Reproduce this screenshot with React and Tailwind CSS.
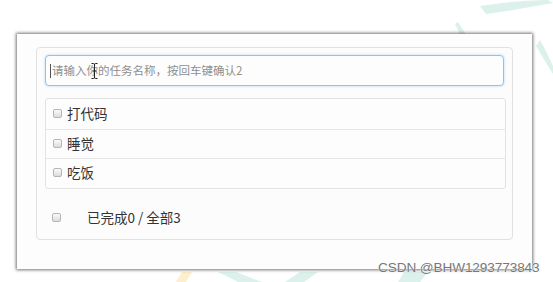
import React from 'react'

const cjk = { fontFamily: '"Noto Sans CJK SC", "Liberation Sans", sans-serif' }

const Box = () => (
  <span className="inline-block w-[9px] h-[9px] rounded-[2px] border border-[#b5b5b5] bg-gradient-to-b from-[#fafafa] to-[#dcdcdc] shrink-0" />
)

const todos = ['打代码', '睡觉', '吃饭']

export default function App() {
  return (
    <div className="relative w-[553px] h-[282px] bg-white overflow-hidden" style={cjk}>
      {/* watermark strokes behind the window */}
      <svg className="absolute inset-0" width="553" height="282" viewBox="0 0 553 282">
        <path d="M480 6 C500 3 525 0 548 0 L553 3 C530 7 505 12 486 14 Z" fill="#dcf1eb" />
        <path d="M458 22 C462 28 466 34 468 40 L462 40 C460 34 457 28 455 24 Z" fill="#dcf1eb" />
        <path d="M540 40 C546 50 550 60 553 66 L553 74 C548 66 542 56 536 46 Z" fill="#dcf1eb" />
        <path d="M176 282 L182 272 L192 272 L186 282 Z" fill="#fdefcc" />
        <path d="M218 272 L236 272 L262 282 L238 282 Z" fill="#dcf1eb" />
        <path d="M285 282 L300 272 L318 272 L304 282 Z" fill="#dcf1eb" />
        <path d="M404 272 L428 272 L420 282 L398 282 Z" fill="#dcf1eb" />
      </svg>

      <div className="relative pt-[34px] pl-[17px]">
        <div className="w-[515px] h-[235px] bg-[#fdfdfd] shadow-[0_0_3px_1px_rgba(0,0,0,0.55)] pt-[13px] pl-[19px]">
          <div className="w-[477px] h-[193px] rounded-[4px] border border-[#e1e1e1] bg-[#fcfcfc] pt-[7px] pl-[8px]">
            {/* input */}
            <div className="relative w-[459px] h-[31px] rounded-[4px] border border-[#8cc4ee] bg-[#fdfdfd] shadow-[0_0_3px_rgba(102,175,233,0.45)] flex items-center pl-[4px]">
              <span className="w-px h-[14px] bg-[#555] mr-[1px]" />
              <span className="text-[11.5px] text-[#8f8f8f] leading-none">请输入你的任务名称，按回车键确认2</span>
              <svg className="absolute left-[45px] top-[7px]" width="7" height="16" viewBox="0 0 7 16">
                <path d="M0.5 0.5 H2.5 Q3.5 0.5 3.5 2 V14 Q3.5 15.5 2.5 15.5 H0.5 M6.5 0.5 H4.5 Q3.5 0.5 3.5 2 M6.5 15.5 H4.5 Q3.5 15.5 3.5 14 M1.5 8 H5.5" stroke="#222" strokeWidth="1" fill="none" />
              </svg>
            </div>

            {/* list */}
            <div className="mt-[12px] w-[461px] rounded-[3px] border border-[#e3e3e3] bg-[#fdfdfd]">
              {todos.map((t, i) => (
                <div
                  key={t}
                  className={`h-[29.5px] flex items-center gap-[5px] pl-[7px] pb-[1px] ${i > 0 ? 'border-t border-[#e6e6e6]' : ''}`}
                >
                  <Box />
                  <span className="text-[13.5px] text-[#333] leading-none">{t}</span>
                </div>
              ))}
            </div>

            {/* footer */}
            <div className="mt-[22px] flex items-center pl-[7px]">
              <Box />
              <span className="ml-[26px] text-[13.5px] text-[#333] leading-none">已完成0 / 全部3</span>
            </div>
          </div>
        </div>
      </div>

      <div
        className="absolute left-[378px] top-[261px] text-[13.6px] text-[#777] leading-none tracking-[-0.1px]"
        style={{ fontFamily: '"Liberation Sans", sans-serif', textShadow: '0 0 1px #fff, 0 0 1px #fff' }}
      >
        CSDN @BHW1293773843
      </div>
    </div>
  )
}
